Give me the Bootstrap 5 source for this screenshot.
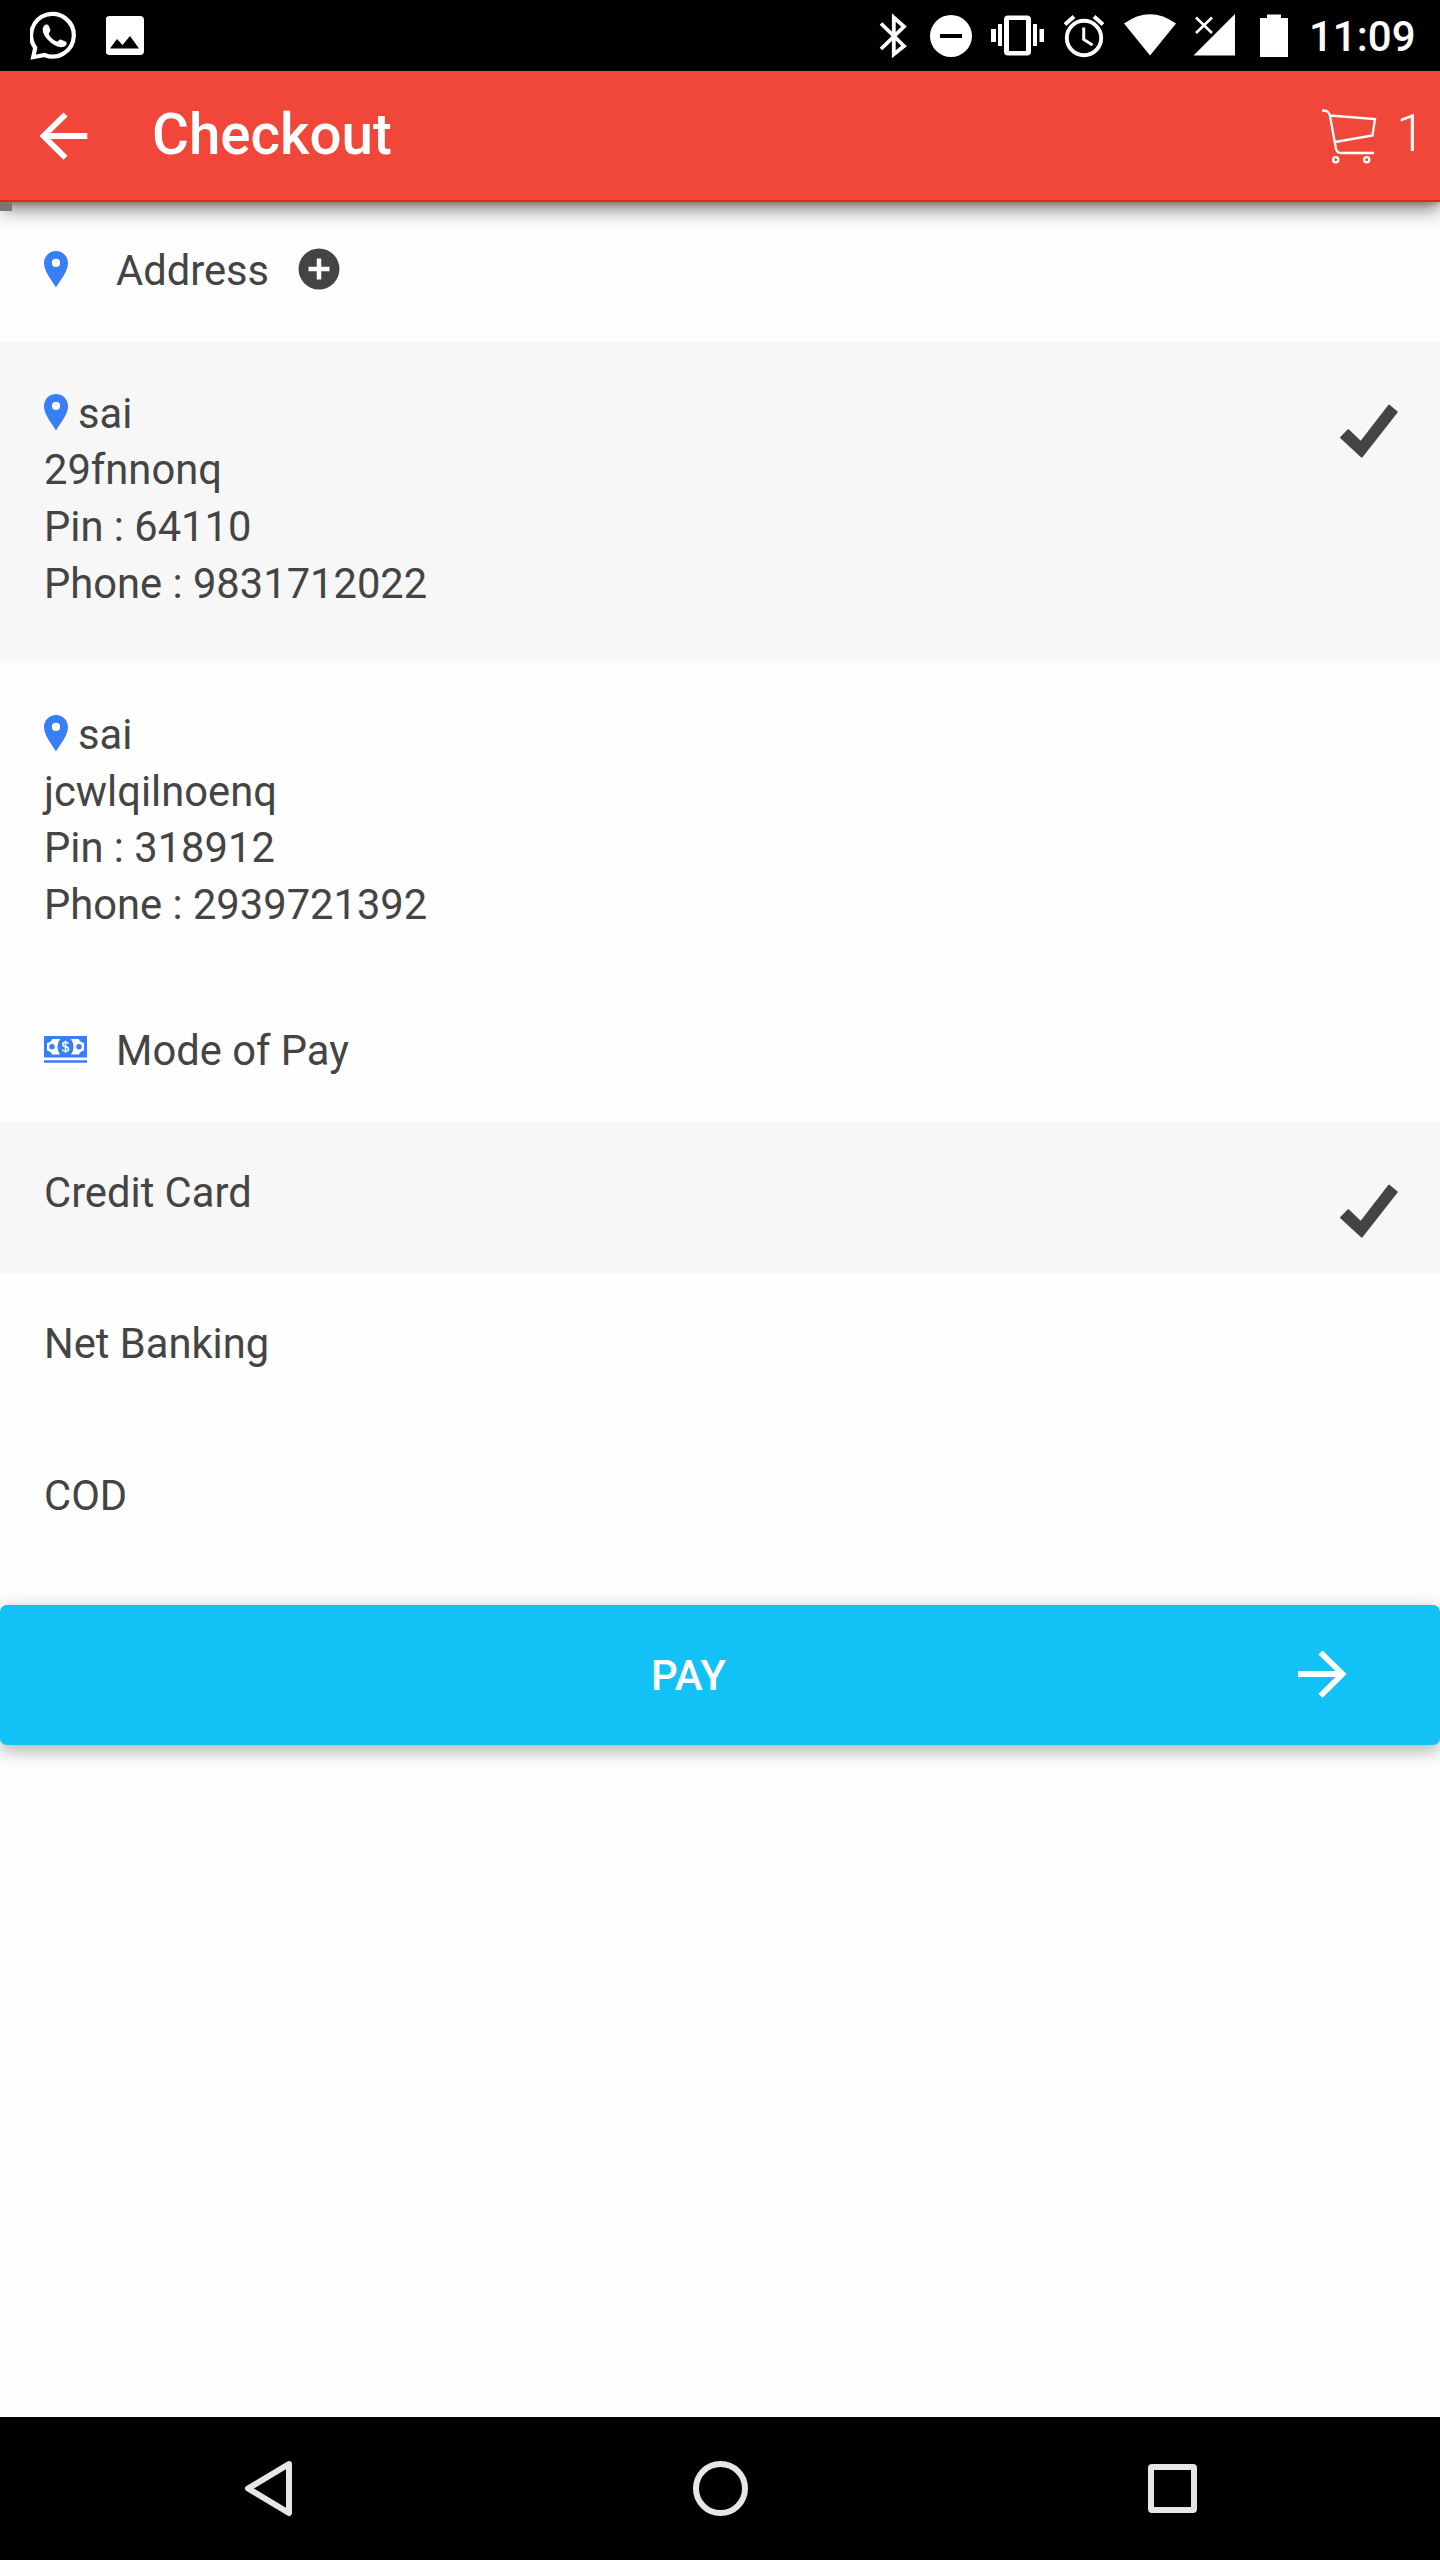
<!DOCTYPE html>
<html lang="en">
<head>
<meta charset="utf-8">
<meta name="viewport" content="width=device-width, initial-scale=1">
<title>Checkout</title>
<link href="https://cdn.jsdelivr.net/npm/bootstrap@5.3.0/dist/css/bootstrap.min.css" rel="stylesheet">
<style>
  body { font-family: Roboto, "Noto Sans", sans-serif; font-size: 41.7px; line-height: 56.700px; color: #444; background: #fefefe; }
  svg { display: block; flex: none; }
  .phone { width: 1440px; height: 2560px; }
  .status-bar { height: 71px; background: #000; color: #fff; padding: 0 24px 0 30px; }
  .clock { font-size: 42px; font-weight: 500; line-height: 71px; padding-top: 2px; width: 107px; white-space: nowrap; }
  .app-bar { height: 131px; background: #f1473a; border-bottom: 2px solid #ea2415; color: #fff; z-index: 2; padding: 0 15px 0 38px;
    box-shadow: 0 7px 18px rgba(0,0,0,.5), 0 2px 6px rgba(0,0,0,.22); }
  .app-title { font-size: 56.5px; font-weight: 500; line-height: 128px; margin: -1px 0 0 62px; }
  .cart-count { font-size: 52px; font-weight: 300; line-height: 126px; margin: -4px 0 0 18px; }
  .bar-ico { margin-top: -2px; }
  .scroll-nub { left: 0; top: 131px; width: 12px; height: 9px; background: #777; }
  .sect-head { padding: 0 44px; }
  .sect-address { height: 140px; padding-top: 41px; }
  .sect-pay { height: 137px; padding-top: 38.5px; }
  .sect-ico { width: 72px; }
  .add-ico { margin: 5px 0 0 29px; }
  .choice { padding: 43.700px 44.3px 50.800px 44px; }
  .choice.picked { background: #f7f7f7; }
  .tick { margin: 18.3px -2px -16px 0; }
  .name-gap { gap: 10px; }
  .pay-btn { height: 140px; margin-top: 30px; background: #12c1f5; color: #fff; border-radius: 7px; border: 0; padding: 0;
    font-size: 42px; font-weight: 500; box-shadow: 0 7px 18px rgba(0,0,0,.26), 0 0 18px rgba(0,0,0,.08); }
  .pay-label { padding-left: 79px; }
  .pay-arrow { margin: -3px 92px 0 0; }
  .nav-keys { height: 143px; background: #000; }
  .blue { fill: #387ef5; }
</style>
</head>
<body>
<svg width="0" height="0" class="position-absolute">
  <defs>
    <symbol id="pin" viewBox="0 0 24 37"><path fill-rule="evenodd" d="M12 0C5.300 0 0 5.300 0 12.300C0 20.500 8.500 30.500 12 36.500C15.500 30.500 24 20.500 24 12.300C24 5.300 18.700 0 12 0zM12 7.800a4.100 4.100 0 1 1 0 8.200a4.100 4.100 0 0 1 0-8.200z"/></symbol>
    <symbol id="check" viewBox="0 0 58 54"><path d="M.3 33 7.600 25.500Q8.300 24.800 9 25.500L20.700 36.700 48.300 1Q49 .2 49.800 .9L57.300 7.300Q58 8 57.400 8.800L22.700 53Q21.900 54 21 53.200L.4 34.300Q-.3 33.600 .3 33z"/></symbol>
  </defs>
</svg>
<div class="phone d-flex flex-column overflow-hidden">
  <header class="status-bar d-flex align-items-center">
    <svg width="52" height="71" viewBox="29 0 52 71"><path d="M34.200 47.700A21.300 21.300 0 1 1 43.500 55L32.200 57.200z" fill="none" stroke="#fff" stroke-width="4.200"/><path fill="#fff" d="M44.500 24.700c1.500-.4 3 .1 3.500 1.500l1.400 3.800c.4 1.300-1.900 3-1.600 4 1.300 3.400 4.500 6.200 8 7.400 1.200.4 2.600-2.500 4-1.900l5 2.300c1.500.8.9 3-.2 4-2.500 2.200-7 2-12-1.200C46.500 40.500 42 35 41.700 30c-.1-2.400 1-4.700 2.800-5.300z"/></svg>
    <svg class="ms-4" width="42" height="71" viewBox="106 0 42 71"><path fill="#fff" fill-rule="evenodd" d="M109.500 16H140q4 0 4 4V51q0 4-4 4H109.500q-4 0-4-4V20q0-4 4-4zM110 48.500H139L130 36 122.500 45 117 39z"/></svg>
    <div class="d-flex align-items-center ms-auto">
      <svg width="432" height="71" viewBox="873 0 432 71" fill="#fff">
        <path d="M881 23.500 904 46 893.800 54.200V17.500L904 26.500 881 49" fill="none" stroke="#fff" stroke-width="3.800"/>
        <path fill-rule="evenodd" d="M951 15a21 21 0 1 1 0 42a21 21 0 0 1 0-42zM940 34v4h22v-4z"/>
        <rect x="991" y="29" width="5" height="13"/><rect x="998" y="24" width="4" height="22"/><rect x="1033" y="24" width="4" height="22"/><rect x="1039.500" y="29" width="4.500" height="13"/>
        <path fill-rule="evenodd" d="M1008 15.500h19q4 0 4 4v32q0 4-4 4h-19q-4 0-4-4v-32q0-4 4-4zM1009 20v31h17V20z"/>
        <g fill="none" stroke="#fff" stroke-width="3.900"><circle cx="1084" cy="38" r="17.200"/><path d="M1083.700 27.500V39.500L1092.500 45" stroke-width="3"/><path d="M1065 24.500 1074 16.500M1103 24.500 1094 16.500" stroke-width="4"/></g>
        <path d="M1124 23.500Q1150 5 1176 23.500L1150 55.500z"/>
        <path d="M1235 14V55.500H1193.500z"/>
        <path d="M1196 17.500 1212 33M1212 17.500 1196 33" fill="none" stroke="#000" stroke-width="6"/>
        <path d="M1196 17.500 1212 33M1212 17.500 1196 33" fill="none" stroke="#fff" stroke-width="2.600"/>
        <path d="M1267 14.500h14v3.500h7v39h-28V18h7z"/>
      </svg>
      <div class="clock ms-1">11:09</div>
    </div>
  </header>

  <nav class="app-bar d-flex align-items-center position-relative">
    <svg class="bar-ico" width="52" height="128" viewBox="38 71 52 128"><path d="M65.500 114.500 43.500 136 65.500 157.700M43 136H87.300" fill="none" stroke="#fff" stroke-width="5.800"/></svg>
    <div class="app-title">Checkout</div>
    <svg class="bar-ico ms-auto" width="58" height="128" viewBox="1320 71 58 128"><g fill="none" stroke="#fff" stroke-width="2.300"><path d="M1322 110.500C1327 110.500 1329 111.500 1330 116L1336 149Q1337 153 1341 153H1374M1330 115.500 1375 119 1372.500 135.500 1335 142"/><circle cx="1335.700" cy="159.700" r="2.600"/><circle cx="1366.700" cy="159.700" r="2.600"/></g></svg>
    <div class="cart-count">1</div>
    <span class="scroll-nub position-absolute"></span>
  </nav>

  <main class="flex-grow-1">
    <div class="sect-head sect-address d-flex align-items-start">
      <div class="sect-ico"><svg class="blue mt-2" width="24" height="37"><use href="#pin"/></svg></div>
      <div>Address</div>
      <svg class="add-ico" width="42" height="42" viewBox="0 0 42 42"><circle cx="21" cy="21" r="20.500" fill="#444"/><path d="M21 10.500V31.500M10.500 21H31.500" stroke="#fff" stroke-width="4.500"/></svg>
    </div>
    <section>
      <div class="choice picked d-flex align-items-start justify-content-between">
        <div>
          <div class="d-flex name-gap"><svg class="blue mt-2" width="24" height="37"><use href="#pin"/></svg><span>sai</span></div>
          <div>29fnnonq</div><div>Pin : 64110</div><div>Phone : 9831712022</div>
        </div>
        <svg class="tick" width="58" height="54" fill="#444"><use href="#check"/></svg>
      </div>
      <div class="choice">
        <div class="d-flex name-gap"><svg class="blue mt-2" width="24" height="37"><use href="#pin"/></svg><span>sai</span></div>
        <div>jcwlqilnoenq</div><div>Pin : 318912</div><div>Phone : 2939721392</div>
      </div>
    </section>
    <div class="sect-head sect-pay d-flex align-items-start">
      <div class="sect-ico"><svg style="margin-top:13px" width="43" height="28" viewBox="0 0 43 28">
        <path class="blue" d="M0 0h43v21.500H0zM0 24.200h43v2.600H0z"/>
        <path fill="#fff" d="M8 3H16Q11 10.700 16 18.500H8Q7.500 15.500 3 14.500V7Q7.500 6 8 3zM35 3H27Q32 10.700 27 18.500H35Q35.500 15.500 40 14.500V7Q35.500 6 35 3z"/>
        <circle class="blue" cx="8" cy="10.800" r="2.700"/><circle class="blue" cx="35" cy="10.800" r="2.700"/>
        <path d="M24.500 7.800Q23.800 6.300 21.500 6.300Q18.800 6.300 18.800 8.400Q18.800 10.200 21.500 10.700Q24.500 11.200 24.500 13.200Q24.500 15.200 21.500 15.200Q19 15.200 18.300 13.500M21.500 4.700V16.800" fill="none" stroke="#fff" stroke-width="1.500"/>
      </svg></div>
      <div>Mode of Pay</div>
    </div>
    <section>
      <div class="choice picked d-flex align-items-start justify-content-between">
        <div>Credit Card</div>
        <svg class="tick" width="58" height="54" fill="#444"><use href="#check"/></svg>
      </div>
      <div class="choice">Net Banking</div>
      <div class="choice">COD</div>
    </section>
    <button class="pay-btn btn w-100 d-flex align-items-center" type="button">
      <span class="pay-label flex-grow-1">PAY</span>
      <svg class="pay-arrow" width="50" height="50" viewBox="0 0 50 50"><path d="M22.500 3.500 44.500 25 22.500 46.700M0 25H45" fill="none" stroke="#fff" stroke-width="5.800"/></svg>
    </button>
  </main>

  <footer class="nav-keys">
    <svg width="1440" height="143" viewBox="0 2417 1440 143" fill="none" stroke="#e6e6e6" stroke-width="6" stroke-linejoin="round">
      <path d="M289 2464 248 2488.500 289 2513z"/><circle cx="720.500" cy="2488.500" r="24.500"/><rect x="1151" y="2467" width="43" height="43" rx="1"/>
    </svg>
  </footer>
</div>
<script src="https://cdn.jsdelivr.net/npm/bootstrap@5.3.0/dist/js/bootstrap.bundle.min.js"></script>
</body>
</html>
